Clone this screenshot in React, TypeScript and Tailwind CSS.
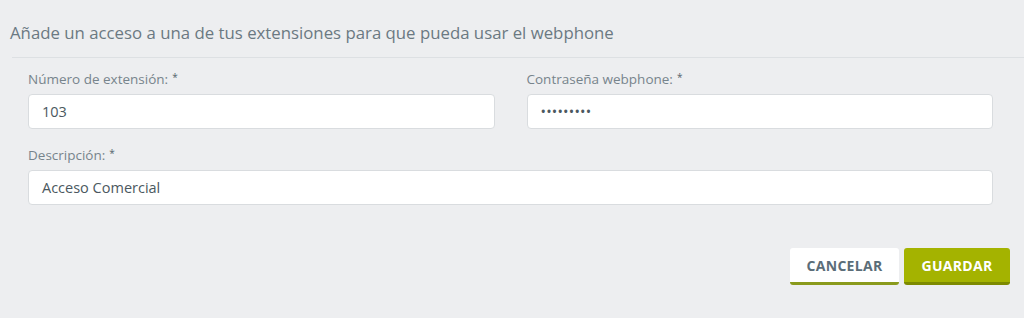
import React from "react";

const font = { fontFamily: '"Open Sans", "Noto Sans", sans-serif' };

function Label({ children }: { children: React.ReactNode }) {
  return (
    <div className="text-[13.5px] leading-[18px] text-[#77848c] mb-[6px]">
      {children}
      <sup className="text-[#55636b] text-[10px] ml-[4px] relative top-[-3px]">*</sup>
    </div>
  );
}

function Field({ value, className = "" }: { value: string; className?: string }) {
  return (
    <div
      className={
        "h-[35px] bg-white border border-[#d9dcdf] rounded-[4px] flex items-center pl-[13px] text-[14.5px] text-[#4b5860] " +
        className
      }
    >
      {value}
    </div>
  );
}

export default function App() {
  return (
    <div className="w-[1024px] h-[318px] bg-[#edeef0] pl-[10px] pt-[22px]" style={font}>
      <div className="text-[16.8px] leading-[22px] text-[#6b7982]">
        Añade un acceso a una de tus extensiones para que pueda usar el webphone
      </div>
      <div className="ml-[2px] mt-[13px] h-px bg-[#dde0e3]" />
      <div className="pl-[18px] pr-[31px] pt-[12px]">
        <div className="grid grid-cols-2 gap-x-[32px]">
          <div>
            <Label>Número de extensión:</Label>
            <Field value="103" />
          </div>
          <div>
            <Label>Contraseña webphone:</Label>
            <Field value="•••••••••" className="text-[11px] tracking-[0.2px] text-[#3c474e]" />
          </div>
        </div>
        <div className="mt-[17px]">
          <Label>Descripción:</Label>
          <Field value="Acceso Comercial" />
        </div>
      </div>
      <div className="flex justify-end gap-[5px] pr-[14px] mt-[43px]">
        <button className="h-[37px] w-[109px] bg-white rounded-[3px] border-b-[3px] border-[#8a9a1c] text-[14px] font-bold text-[#5b6d78] tracking-[0.3px]">
          CANCELAR
        </button>
        <button className="h-[37px] w-[106px] bg-[#a4b300] rounded-[3px] border-b-[3px] border-[#7d8a00] text-[14px] font-bold text-white tracking-[0.3px]">
          GUARDAR
        </button>
      </div>
    </div>
  );
}
